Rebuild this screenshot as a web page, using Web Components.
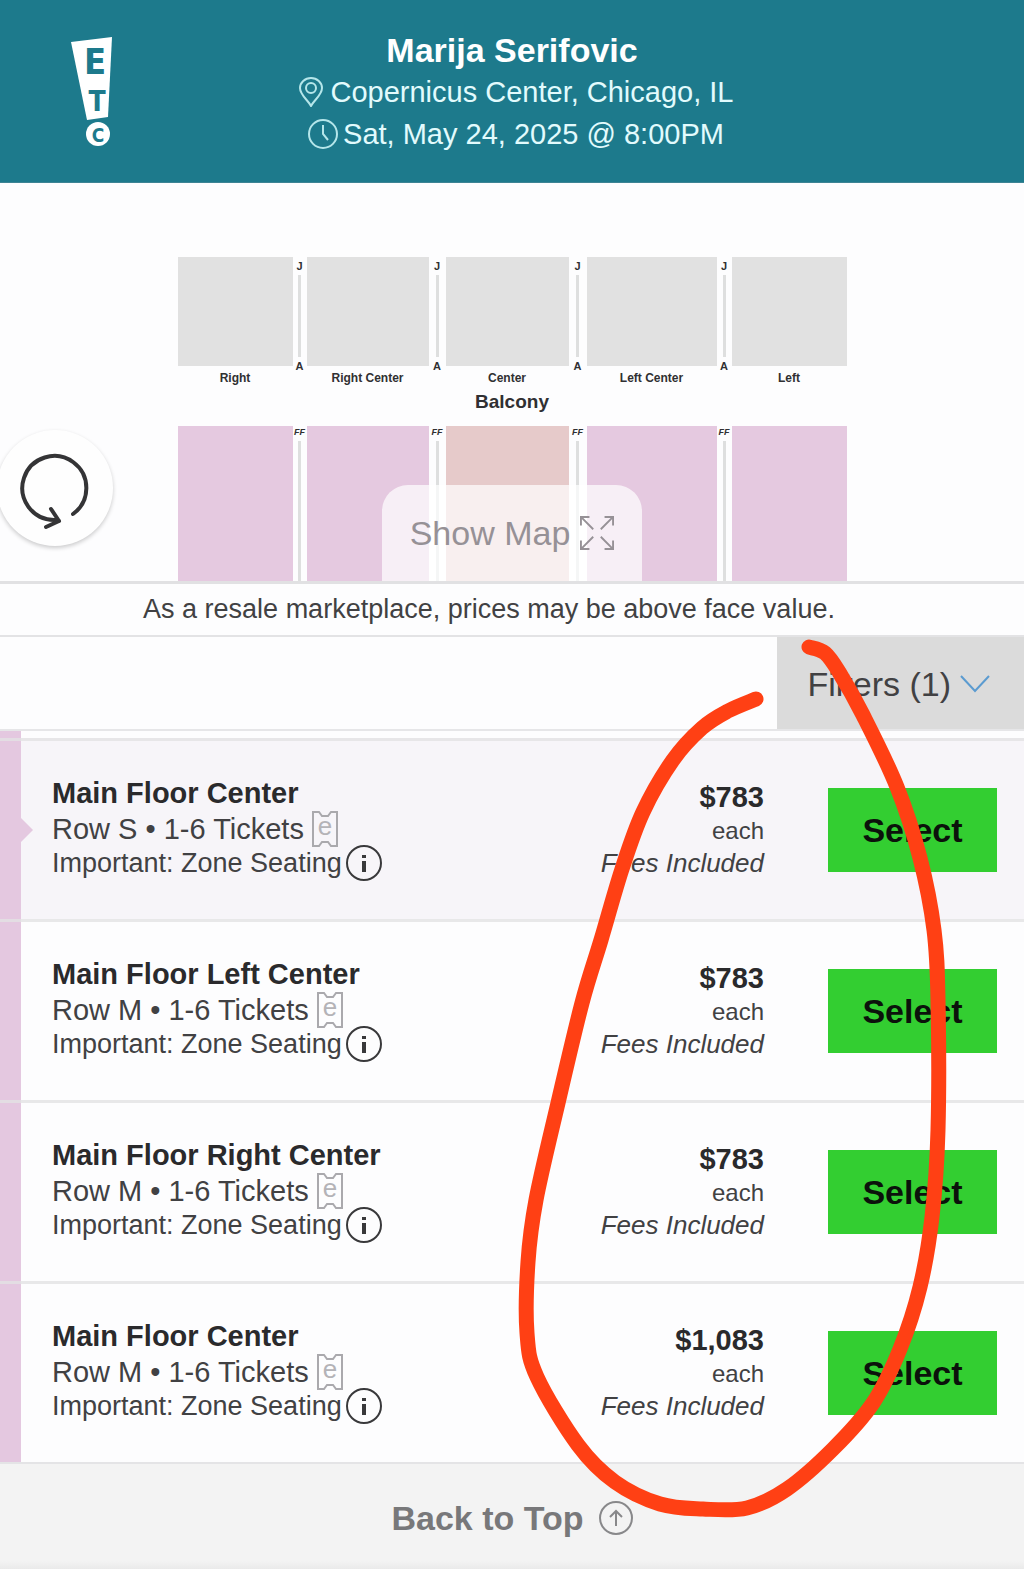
<!DOCTYPE html>
<html lang="en">
<head>
<meta charset="utf-8">
<meta name="viewport" content="width=device-width, initial-scale=1">
<title>Marija Serifovic Tickets</title>
<style>
    body {
        margin: 0;
        background: #fdfdfe;
        color: #414143;
        font-family: "Liberation Sans", Arial, sans-serif;
    }
</style>
</head>
<body>
<ticket-page>
    <event-header>
        <span slot="title">Marija Serifovic</span>
        <span slot="venue">Copernicus Center, Chicago, IL</span>
        <span slot="date">Sat, May 24, 2025 @ 8:00PM</span>
    </event-header>
    <seat-map></seat-map>
    <resale-notice>As a resale marketplace, prices may be above face value.</resale-notice>
    <filter-bar>Filters (1)</filter-bar>
    <ticket-list>
        <ticket-row active section="Main Floor Center" row="S" price="$783"></ticket-row>
        <ticket-row section="Main Floor Left Center" row="M" price="$783"></ticket-row>
        <ticket-row section="Main Floor Right Center" row="M" price="$783"></ticket-row>
        <ticket-row section="Main Floor Center" row="M" price="$1,083"></ticket-row>
    </ticket-list>
    <back-to-top>Back to Top</back-to-top>
    <marker-circle slot="overlay"></marker-circle>
</ticket-page>

<script>
class TicketPage extends HTMLElement {
    constructor() {
        super();
        this.attachShadow({ mode: 'open' })
        this.shadowRoot.innerHTML = `
            <style>
                :host {
                    display: flex;
                    flex-direction: column;
                    position: relative;
                    overflow: hidden;
                    min-height: 100vh;
                }
            </style>
            <slot></slot>
            <slot name="overlay"></slot>
        `;
    }
}

class EventHeader extends HTMLElement {
    constructor() {
        super();
        this.attachShadow({ mode: 'open' })
        this.shadowRoot.innerHTML = `
            <style>
                :host {
                    display: grid;
                    grid-template-columns: 1fr auto 1fr;
                    padding: 29px 0 27px;
                    background: #1d7a8c;
                    border-bottom: 1px solid #3d8494;
                    color: #e2fbfd;
                }
                .logo {
                    display: block;
                    margin: 7px 0 0 70px;
                }
                .logo text {
                    font-family: "Liberation Sans Narrow", "DejaVu Sans Condensed", "Liberation Sans", sans-serif;
                    font-weight: bold;
                    fill: #1d7a8c;
                    text-anchor: middle;
                }
                h1, p {
                    display: flex;
                    align-items: center;
                    justify-content: center;
                    margin: 0;
                    font-size: 29px;
                    font-weight: normal;
                    line-height: 42px;
                }
                h1 {
                    color: #fff;
                    font-size: 34px;
                    font-weight: bold;
                }
                p {
                    padding-left: 8px;
                }
                p svg {
                    fill: none;
                    stroke: #b5e6ea;
                    stroke-width: 2;
                }
                .venue svg {
                    margin-right: 8px;
                }
                .date svg {
                    margin-right: 5px;
                }
            </style>
            <svg class="logo" width="44" height="112" viewBox="0 0 44 112" role="img" aria-label="ETC">
                <path fill="#fff" d="M1 6 L42 1 L38 81 L17 84 Z"/>
                <circle cx="28" cy="98" r="12" fill="#fff"/>
                <text x="25" y="38" font-size="36">E</text>
                <text x="27" y="75" font-size="28">T</text>
                <text x="28" y="106" font-size="19">C</text>
            </svg>
            <div>
                <h1><slot name="title"></slot></h1>
                <p class="venue">
                    <svg width="24" height="30" viewBox="0 0 24 30"><path d="M12 29 C9 23 1 18 1 11 A11 10 0 0 1 23 11 C23 18 15 23 12 29 Z"/><circle cx="12" cy="11" r="5"/></svg>
                    <slot name="venue"></slot>
                </p>
                <p class="date">
                    <svg width="30" height="30" viewBox="0 0 30 30"><circle cx="15" cy="15" r="14"/><path d="M15 6 V15 L20 21"/></svg>
                    <slot name="date"></slot>
                </p>
            </div>
        `;
    }
}

class SeatMap extends HTMLElement {
    constructor() {
        super();
        this.attachShadow({ mode: 'open' })
        this.shadowRoot.innerHTML = `
            <style>
                :host {
                    display: block;
                    position: relative;
                    overflow: hidden;
                    padding-top: 74px;
                    border-bottom: 3px solid #e1e1e3;
                    color: #303032;
                    font-weight: bold;
                }
                .seats {
                    display: grid;
                    grid-template-columns: 115px 14px 122px 17px 123px 18px 130px 15px 115px;
                    justify-content: center;
                    text-align: center;
                }
                .balcony {
                    height: 109px;
                    background: #e1e1e1;
                }
                .floor {
                    height: 155px;
                    background: #e5c9e0;
                }
                .center {
                    background: #e6caca;
                }
                .aisle {
                    display: flex;
                    flex-direction: column;
                    align-items: center;
                    gap: 3px;
                    padding-top: 3px;
                    font-size: 11px;
                    line-height: 12px;
                }
                .aisle i {
                    flex: 1;
                    width: 3px;
                    background: #dedfdf;
                }
                .low {
                    height: 112px;
                    margin-bottom: -6px;
                }
                .main {
                    padding-top: 0;
                    font-size: 9px;
                    font-style: italic;
                }
                .name {
                    font-size: 12px;
                    line-height: 24px;
                }
                h2 {
                    margin: 0;
                    padding: 0 0 12px;
                    font-size: 19px;
                    line-height: 24px;
                    text-align: center;
                }
                button {
                    border: 0;
                    padding: 0;
                    font: inherit;
                    position: absolute;
                }
                .reset {
                    left: -3px;
                    bottom: 35px;
                    width: 116px;
                    height: 116px;
                    border-radius: 50%;
                    background: #fefefe;
                    box-shadow: 0 2px 4px rgba(0, 0, 0, .2);
                }
                .reset svg {
                    display: block;
                    margin: auto;
                }
                .show {
                    left: 50%;
                    bottom: 0;
                    transform: translateX(-50%);
                    display: flex;
                    align-items: center;
                    justify-content: center;
                    gap: 10px;
                    width: 260px;
                    height: 96px;
                    border-radius: 26px 26px 0 0;
                    background: rgba(255, 255, 255, .7);
                    color: #969196;
                    font-size: 34px;
                    font-weight: normal;
                }
            </style>
            <div class="seats">
                <div class="balcony"></div>
                <div class="aisle low">J<i></i>A</div>
                <div class="balcony"></div>
                <div class="aisle low">J<i></i>A</div>
                <div class="balcony"></div>
                <div class="aisle low">J<i></i>A</div>
                <div class="balcony"></div>
                <div class="aisle low">J<i></i>A</div>
                <div class="balcony"></div>
            </div>
            <div class="seats name">
                <span>Right</span><span></span>
                <span>Right Center</span><span></span>
                <span>Center</span><span></span>
                <span>Left Center</span><span></span>
                <span>Left</span>
            </div>
            <h2>Balcony</h2>
            <div class="seats">
                <div class="floor"></div>
                <div class="aisle main">FF<i></i></div>
                <div class="floor"></div>
                <div class="aisle main">FF<i></i></div>
                <div class="floor center"></div>
                <div class="aisle main">FF<i></i></div>
                <div class="floor"></div>
                <div class="aisle main">FF<i></i></div>
                <div class="floor"></div>
            </div>
            <button class="reset" type="button" aria-label="Reset map">
                <svg width="76" height="84" viewBox="0 -3 76 84" fill="none" stroke="#343436" stroke-width="4" stroke-linecap="round" stroke-linejoin="round">
                    <path d="M56 65 A32 32 0 1 0 37 71 L42 72 M34 60 L42 72 L29 78"/>
                </svg>
            </button>
            <button class="show" type="button">Show Map
                <svg width="34" height="34" viewBox="0 0 36 36" fill="none" stroke="#969196" stroke-width="2">
                    <path d="M14 14 L1 1 M1 10 V1 H10 M22 14 L35 1 M26 1 H35 V10 M14 22 L1 35 M1 26 V35 H10 M22 22 L35 35 M26 35 H35 V26"/>
                </svg>
            </button>
        `;
    }
}

class ResaleNotice extends HTMLElement {
    constructor() {
        super();
        this.attachShadow({ mode: 'open' })
        this.shadowRoot.innerHTML = `
            <style>
                :host {
                    display: block;
                    padding-right: 46px;
                    border-bottom: 2px solid #e3e3e5;
                    font-size: 27px;
                    line-height: 51px;
                    text-align: center;
                }
            </style>
            <slot></slot>
        `;
    }
}

class FilterBar extends HTMLElement {
    constructor() {
        super();
        this.attachShadow({ mode: 'open' })
        this.shadowRoot.innerHTML = `
            <style>
                :host {
                    display: flex;
                    justify-content: flex-end;
                    border-bottom: 2px solid #e6e6e8;
                }
                button {
                    display: flex;
                    align-items: center;
                    gap: 9px;
                    padding: 2px 34px 0 30px;
                    border: 0;
                    background: #dbdbdb;
                    color: #414143;
                    font: inherit;
                    font-size: 34px;
                    line-height: 90px;
                }
            </style>
            <button type="button">
                <slot></slot>
                <svg width="30" height="18" viewBox="0 0 30 18" fill="none" stroke="#5b9bd0" stroke-width="2"><path d="M1 1 L15 16 L29 1"/></svg>
            </button>
        `;
    }
}

class TicketList extends HTMLElement {
    constructor() {
        super();
        this.attachShadow({ mode: 'open' })
        this.shadowRoot.innerHTML = `
            <style>
                :host {
                    display: block;
                    padding-top: 7px;
                    background: linear-gradient(to right, #e4c8e0 21px, transparent 21px);
                }
            </style>
            <slot></slot>
        `;
    }
}

class TicketRow extends HTMLElement {
    constructor() {
        super();
        this.attachShadow({ mode: 'open' })
        this.shadowRoot.innerHTML = `
            <style>
                :host {
                    display: flex;
                    align-items: center;
                    position: relative;
                    height: 178px;
                    padding: 0 27px 0 52px;
                    border-top: 3px solid rgba(226, 226, 228, .8);
                }
                :host([active]) {
                    background: linear-gradient(to right, transparent 21px, #f7f5f9 21px);
                }
                :host([active])::before {
                    content: "";
                    position: absolute;
                    left: 21px;
                    top: 50%;
                    margin-top: -12px;
                    border: 12px solid transparent;
                    border-left-color: #e4c8e0;
                    border-right-width: 0;
                }
                .info {
                    flex: 1;
                    padding-bottom: 6px;
                }
                h3, p {
                    display: flex;
                    align-items: center;
                    margin: 0;
                    font-size: 29px;
                    line-height: 36px;
                }
                h3, strong {
                    color: #2a2a2c;
                }
                p {
                    gap: 8px;
                }
                .zone {
                    gap: 4px;
                    height: 32px;
                    font-size: 27px;
                    line-height: 32px;
                }
                .zone button {
                    display: flex;
                    padding: 0;
                    border: 0;
                    background: none;
                }
                .price {
                    display: flex;
                    flex-direction: column;
                    align-items: flex-end;
                    margin-right: 64px;
                    font-size: 24px;
                    line-height: 33px;
                }
                strong {
                    font-size: 29px;
                }
                em {
                    font-size: 26px;
                }
                .select {
                    width: 169px;
                    height: 84px;
                    padding: 0;
                    border: 0;
                    background: #33ce31;
                    color: #0b120b;
                    font: inherit;
                    font-size: 34px;
                    font-weight: bold;
                }
            </style>
            <div class="info">
                <h3 id="section"></h3>
                <p><span id="row"></span>
                    <svg width="26" height="36" viewBox="0 0 26 36" fill="none" stroke="#aaa9ad" stroke-width="2">
                        <path d="M1 1 H7 L10 5 H16 L19 1 H25 V35 H19 L16 31 H10 L7 35 H1 Z"/>
                        <text x="13" y="24" font-size="26" text-anchor="middle" fill="#b4b3b7" stroke="none">e</text>
                    </svg>
                </p>
                <p class="zone">Important: Zone Seating
                    <button type="button" aria-label="Zone seating details">
                        <svg width="36" height="36" viewBox="0 0 36 36">
                            <circle cx="18" cy="18" r="17" fill="none" stroke="#39393b" stroke-width="2"/>
                            <path d="M16 10 H20 V13 H16 Z M16 16 H20 V27 H16 Z" fill="#39393b"/>
                        </svg>
                    </button>
                </p>
            </div>
            <div class="price">
                <strong id="price"></strong>
                <span>each</span>
                <em>Fees Included</em>
            </div>
            <button class="select" type="button">Select</button>
        `;
    }

    connectedCallback() {
        this.shadowRoot.querySelector('#section').textContent = this.getAttribute('section')
        this.shadowRoot.querySelector('#row').textContent = `Row ${this.getAttribute('row')} • 1-6 Tickets`
        this.shadowRoot.querySelector('#price').textContent = this.getAttribute('price')
    }
}

class BackToTop extends HTMLElement {
    constructor() {
        super();
        this.attachShadow({ mode: 'open' })
        this.shadowRoot.innerHTML = `
            <style>
                :host {
                    flex: 1;
                    display: flex;
                    align-items: center;
                    justify-content: center;
                    min-height: 100px;
                    padding-top: 3px;
                    border-top: 2px solid #e4e4e6;
                    background: linear-gradient(to top, #eaeaea, #f3f3f3 8px);
                }
                a {
                    display: flex;
                    align-items: center;
                    gap: 15px;
                    color: #78787a;
                    font-size: 34px;
                    font-weight: bold;
                    text-decoration: none;
                }
            </style>
            <a href="#">
                <slot></slot>
                <svg width="34" height="34" viewBox="0 0 34 34" fill="none" stroke="#88888a" stroke-width="2"><circle cx="17" cy="17" r="16"/><path d="M17 25 V10 M11 16 L17 10 L23 16"/></svg>
            </a>
        `;
    }
}

// Freehand red loop drawn over the prices
class MarkerCircle extends HTMLElement {
    constructor() {
        super();
        this._points = [
            [756, 699], [728, 711], [702, 728], [673, 760], [643, 812], [622, 869],
            [601, 940], [582, 1003], [558, 1103], [536, 1200], [528, 1262], [527, 1333],
            [537, 1377], [578, 1445], [615, 1482], [660, 1504], [703, 1509], [747, 1508],
            [787, 1489], [833, 1449], [873, 1403], [900, 1349], [920, 1287], [932, 1217],
            [938, 1130], [938, 1000], [934, 930], [920, 858], [897, 787], [863, 715],
            [839, 672], [825, 653], [809, 647]
        ];
        this.attachShadow({ mode: 'open' })
        this.shadowRoot.innerHTML = `
            <style>
                :host {
                    display: block;
                    position: absolute;
                    top: 0;
                    right: 0;
                    pointer-events: none;
                }
                svg {
                    display: block;
                }
            </style>
            <svg width="524" height="1540" viewBox="500 0 524 1540" fill="none" stroke="#ff4014" stroke-width="15" stroke-linecap="round" stroke-linejoin="round">
                <path/>
            </svg>
        `;
    }

    connectedCallback() {
        this.shadowRoot.querySelector('path').setAttribute('d', this._curve())
    }

    // smooth curve through every point
    _curve() {
        const p = this._points;
        let d = `M${p[0]}`;
        for (let i = 0; i < p.length - 1; i++) {
            const before = p[i - 1] || p[i];
            const after = p[i + 2] || p[i + 1];
            const c1 = [0, 1].map(k => p[i][k] + (p[i + 1][k] - before[k]) / 6);
            const c2 = [0, 1].map(k => p[i + 1][k] - (after[k] - p[i][k]) / 6);
            d += ` C${c1} ${c2} ${p[i + 1]}`;
        }
        return d;
    }
}

customElements.define('ticket-page', TicketPage)
customElements.define('event-header', EventHeader)
customElements.define('seat-map', SeatMap)
customElements.define('resale-notice', ResaleNotice)
customElements.define('filter-bar', FilterBar)
customElements.define('ticket-list', TicketList)
customElements.define('ticket-row', TicketRow)
customElements.define('back-to-top', BackToTop)
customElements.define('marker-circle', MarkerCircle)
</script>
</body>
</html>
